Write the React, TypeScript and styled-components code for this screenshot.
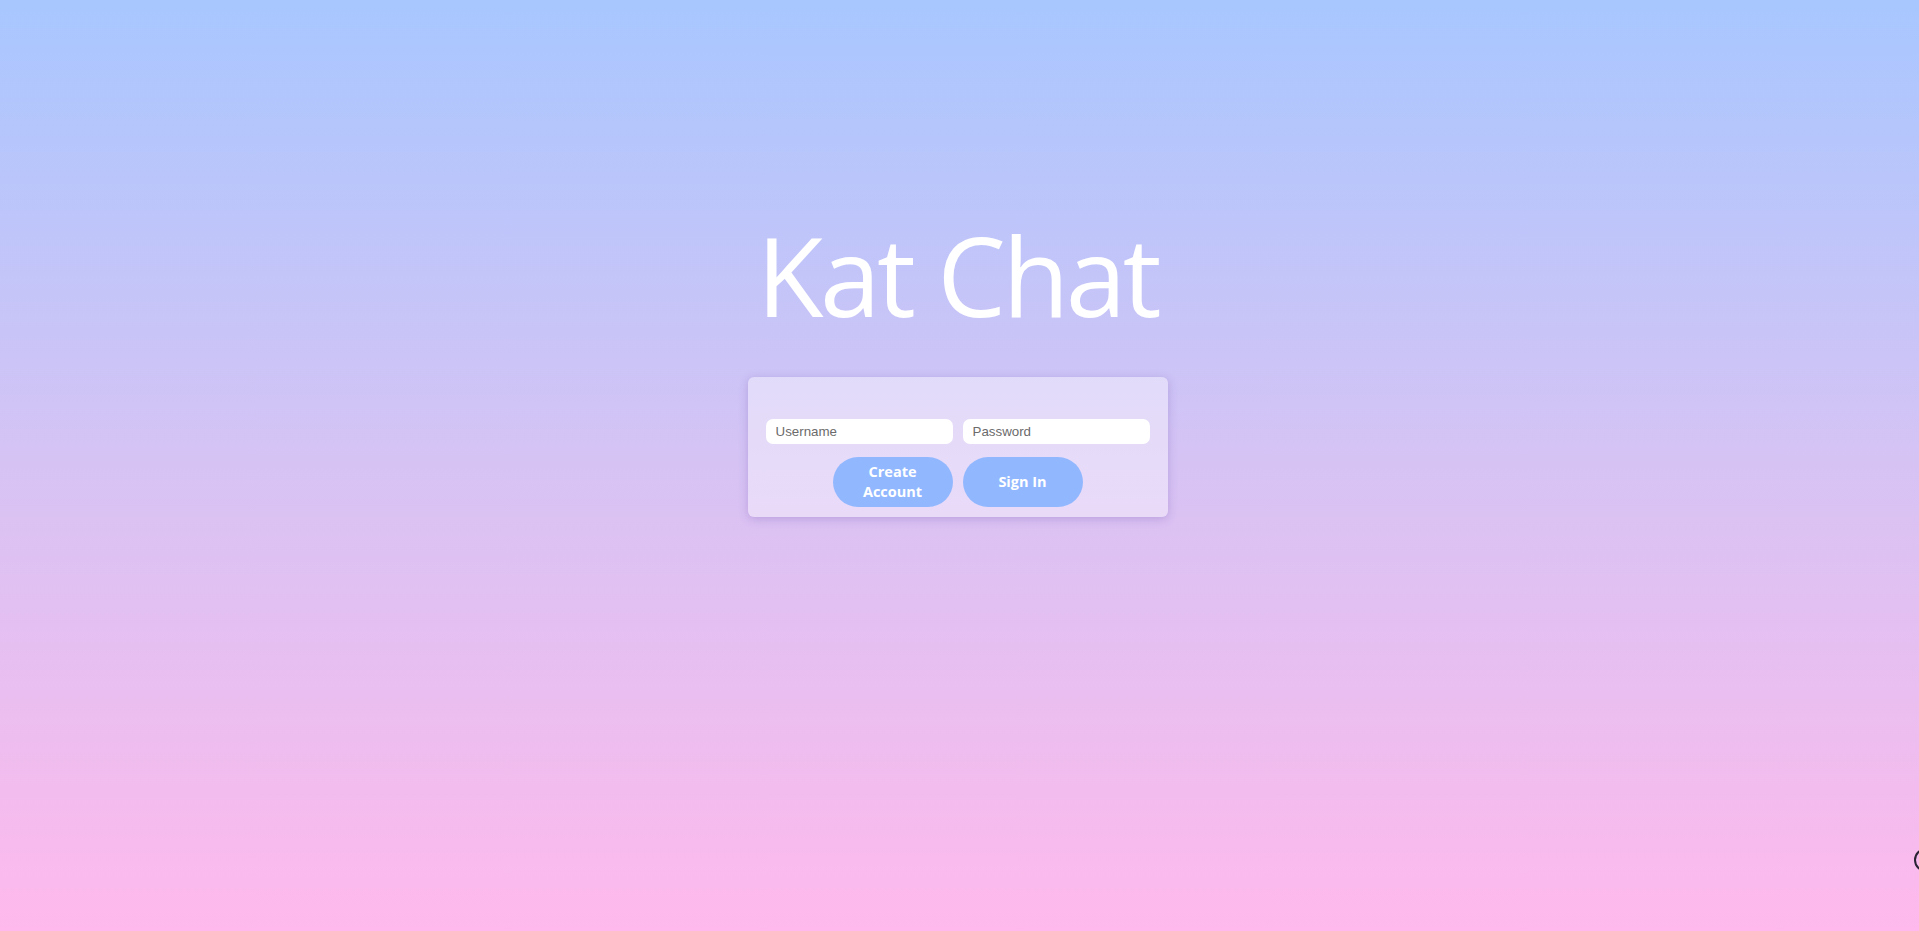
import React from "react";
import styled, { createGlobalStyle } from "styled-components";

const GlobalStyle = createGlobalStyle`
  html, body {
    margin: 0;
    padding: 0;
    height: 100%;
  }
  body {
    font-family: "Open Sans", "Noto Sans", sans-serif;
    overflow: hidden;
  }
  * { box-sizing: border-box; }
`;

const Page = styled.main`
  min-height: 100vh;
  display: flex;
  flex-direction: column;
  align-items: center;
  padding-top: 220px;
  padding-right: 4px;
  background: linear-gradient(180deg, #a8c7ff 0%, #d6c3f4 50%, #ffb9ec 100%);
`;

const Title = styled.h1`
  margin: 0;
  font-family: "Open Sans", "Noto Sans", sans-serif;
  font-weight: 400;
  font-size: 109px;
  line-height: 1;
  color: #ffffff;
  letter-spacing: -3.5px;
`;

const Card = styled.form`
  margin-top: 48px;
  width: 420px;
  padding: 42px 18px 10px;
  border-radius: 6px;
  background: rgba(250, 248, 255, 0.45);
  box-shadow: 0 2px 10px rgba(90, 60, 160, 0.25);
  display: flex;
  flex-direction: column;
  align-items: center;
  gap: 13px;
`;

const InputRow = styled.div`
  width: 100%;
  display: grid;
  grid-template-columns: 1fr 1fr;
  gap: 10px;
`;

const Field = styled.input`
  height: 25px;
  width: 100%;
  border: none;
  outline: none;
  border-radius: 7px;
  background: #ffffff;
  padding: 0 10px;
  font-family: "Liberation Sans", Arial, sans-serif;
  font-size: 13.33px;
  color: #333;
  &::placeholder {
    color: #6b6b6b;
  }
`;

const ButtonRow = styled.div`
  display: flex;
  gap: 10px;
`;

const PillButton = styled.button`
  width: 120px;
  height: 50px;
  border: none;
  border-radius: 25px;
  background: #91b8ff;
  color: #ffffff;
  font-family: "Open Sans", "Noto Sans", sans-serif;
  font-weight: 700;
  font-size: 14.5px;
  line-height: 20px;
  padding: 0 16px;
  cursor: pointer;
`;

const EdgeWidget = styled.div`
  position: fixed;
  left: 1914px;
  top: 848px;
  width: 24px;
  height: 24px;
  border-radius: 50%;
  border: 2px solid #2a2235;
`;

export default function App() {
  return (
    <>
      <GlobalStyle />
      <Page>
        <Title>Kat Chat</Title>
        <Card onSubmit={(e) => e.preventDefault()}>
          <InputRow>
            <Field type="text" placeholder="Username" />
            <Field type="password" placeholder="Password" />
          </InputRow>
          <ButtonRow>
            <PillButton type="button">Create Account</PillButton>
            <PillButton type="submit">Sign In</PillButton>
          </ButtonRow>
        </Card>
        <EdgeWidget />
      </Page>
    </>
  );
}
